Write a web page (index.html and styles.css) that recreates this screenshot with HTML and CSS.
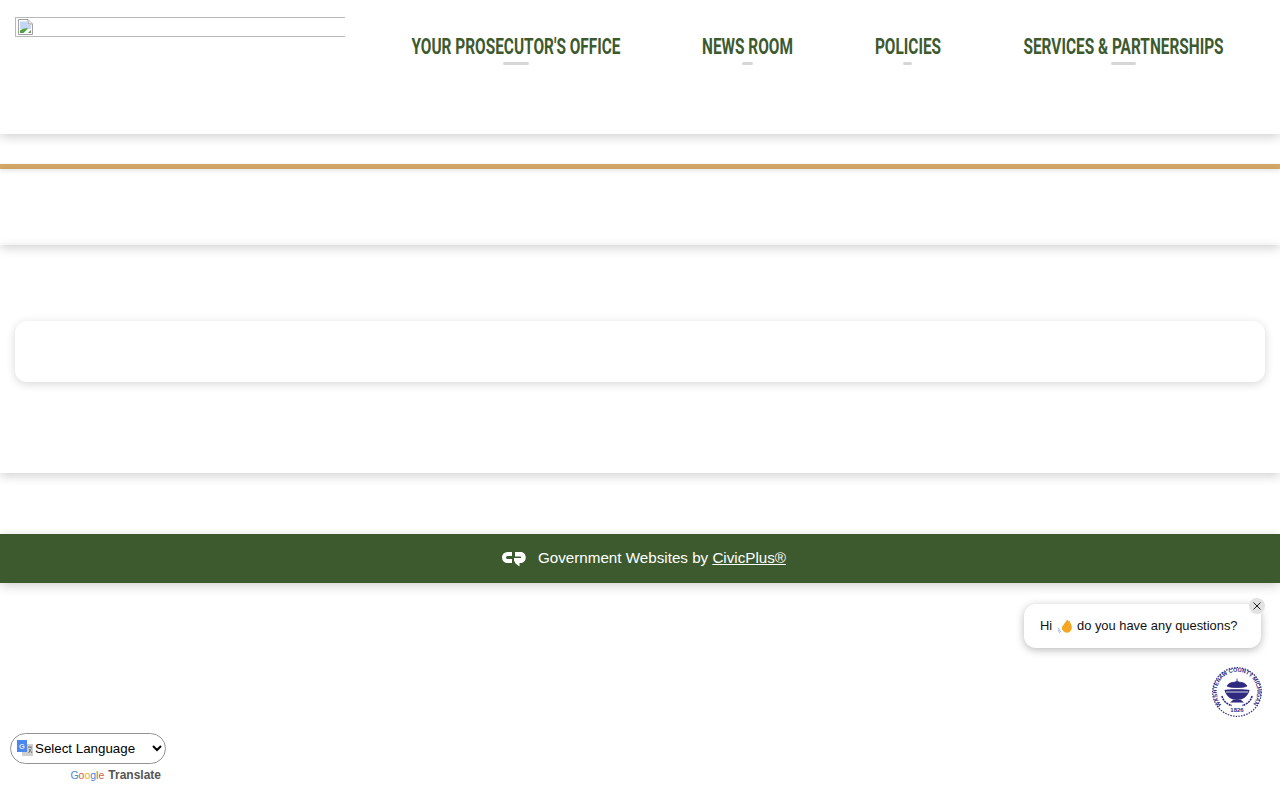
FILE: index.html
```html
<!DOCTYPE html>
<html lang="en">
	<head>
		<meta charset="UTF-8">
		<title>Prosecutor's Office</title>
		<link rel="stylesheet" href="styles.css">
	</head>
	<body>
		<header class="header">
			<a class="logo" href="#">
				<svg class="brokenimg" width="16" height="16" viewBox="0 0 16 16">
					<path d="M1.5 .5H11L15.5 5V15.5H1.5Z" fill="#fff" stroke="#a0a0a0"/>
					<path d="M11 .5V5H15.5" fill="#e8e8e8" stroke="#a0a0a0"/>
					<path d="M3 2.5H10.5V6H14V10L3 10Z" fill="#c3d6f5"/>
					<path d="M3 14V11.5C6 9.5 9 9 11 9.5L6.5 14Z" fill="#4fa03f"/>
					<path d="M11 14L14 11V14Z" fill="#6a9a5a"/>
				</svg>
			</a>
			<nav class="nav">
				<a class="navitem w-office" href="#"><span>YOUR PROSECUTOR'S OFFICE</span></a>
				<a class="navitem w-news" href="#"><span>NEWS ROOM</span></a>
				<a class="navitem w-policies" href="#"><span>POLICIES</span></a>
				<a class="navitem w-services" href="#"><span>SERVICES &amp; PARTNERSHIPS</span></a>
			</nav>
		</header>
		<div class="goldline"></div>
		<div class="band"></div>
		<section class="content">
			<div class="card"></div>
		</section>
		<footer class="footer">
			<svg class="cplogo" width="24" height="16" viewBox="0 0 24 16">
				<path d="M10 3H5.500C3.500 3 2 4.500 2 6.500C2 8.500 3.500 10 5.500 10H10" fill="none" stroke="#fff" stroke-width="4"/>
				<path d="M12 7H18.500C19.500 7 19.500 5.500 18.500 5.500H13V1H18.500C25.500 1 25.500 12 18.500 12H17.500V15.500L13 12V10.500H12Z" fill="#fff"/>
			</svg>
			<span class="footertext">Government Websites by <a href="#">CivicPlus®</a></span>
		</footer>

		<div class="translate">
			<div class="selectwrap">
				<svg class="gicon" width="18" height="17" viewBox="0 0 18 17">
					<rect x="6" y="4" width="11" height="12" fill="#cfcfcf"/>
					<path d="M12 7H16M14 7V8M12.500 13L15.500 8.500M13 9L16 13" stroke="#777" fill="none"/>
					<path d="M1 0H11V12H1Z" fill="#4a88ee"/>
					<text class="gletter" x="3" y="9">G</text>
				</svg>
				<select class="langselect">
					<option>Select Language</option>
				</select>
			</div>
			<div class="poweredby">
				<span class="googleword"><i class="gb">G</i><i class="gr">o</i><i class="gy">o</i><i class="gb">g</i><i class="gg">l</i><i class="gr">e</i></span>
				<a href="#">Translate</a>
			</div>
		</div>

		<div class="chatbubble">
			<span>Hi</span>
			<svg class="wave" width="16" height="16" viewBox="0 0 16 16">
				<path d="M1 9.500C2 11.500 3 13 4 14M1 12C1.500 13 2 14 3 15" stroke="#9ab4dc" fill="none"/>
				<path d="M5 9L9.500 2.500C10.500 1.500 11.500 2.500 11 3.500L11.500 3C12.500 2.500 13.500 3.500 13 4.500C14.500 6 15.500 9 14.500 11.500C13.500 14.500 10 15.500 7.500 14C5.500 13 4.500 11 5 9Z" fill="#f5a623"/>
			</svg>
			<span>do you have any questions?</span>
			<button class="chatclose">
				<svg width="8" height="8" viewBox="0 0 8 8"><path d="M.5 .5L7.500 7.500M7.500 .5L.5 7.500" stroke="#222" stroke-width="1"/></svg>
			</button>
		</div>

		<svg class="seal" width="50" height="50" viewBox="0 0 50 50">
			<defs>
				<path id="sealtop" d="M9.500 38A20.200 20.200 0 1 1 40.500 38"/>
			</defs>
			<circle cx="25" cy="25" r="24.300" fill="#fff" stroke="#2f2a80" stroke-width="1.200" stroke-dasharray="1.500 1.200"/>
			<text class="sealtext"><textPath href="#sealtop" textLength="90" lengthAdjust="spacingAndGlyphs">WASHTENAW COUNTY MICHIGAN</textPath></text>
			<text class="sealyear" x="25" y="45" text-anchor="middle">1826</text>
			<path d="M25 11.500V14M15 19C18 14 22 16.500 25 14C28 16.500 32 14 35 19C32 21 18 21 15 19Z" fill="#2f2a80" stroke="#2f2a80" stroke-width=".8"/>
			<path d="M12.500 23C16 22 34 22 37.500 23C36 30 30 33 25 33C20 33 14 30 12.500 23Z" fill="#2f2a80"/>
			<path d="M14 25H36" stroke="#fff" stroke-width=".8"/>
			<path d="M18 35.500H32L29 33H21Z" fill="#2f2a80"/>
			<path d="M10 29C11 34 15 37.500 20 38.500M40 29C39 34 35 37.500 30 38.500" fill="none" stroke="#2f2a80" stroke-width="1.600" stroke-dasharray="2 .8"/>
		</svg>
	</body>
</html>
```

FILE: styles.css
```css
html, body {
	margin: 0px;
	padding: 0px;
	height: 800px;
	overflow: hidden;
	background-color: #fff;
	font-family: "Liberation Sans", Arial, sans-serif;
}
body {
	position: relative;
}

.header {
	display: flex;
	align-items: flex-start;
	justify-content: space-between;
	box-sizing: border-box;
	height: 134px;
	padding: 17px 15px 0px;
	box-shadow: 0px 3px 10px rgba(0, 0, 0, .18);
}
.logo {
	display: block;
	box-sizing: border-box;
	width: 330px;
	height: 20px;
	padding: 1px;
	border: 1px solid #b8b8b8;
	border-right: none;
	overflow: hidden;
}
.brokenimg {
	display: block;
}
.nav {
	display: flex;
	column-gap: 82.400px;
	margin-right: 41px;
	padding-top: 15px;
}
.navitem {
	display: block;
	color: #3d5a2f;
	text-decoration: none;
	text-align: center;
}
.navitem > span {
	display: block;
	margin: 0px -50px;
	font-family: Roboto, "Liberation Sans", sans-serif;
	font-size: 22px;
	font-weight: 700;
	line-height: 30px;
	white-space: nowrap;
	transform: scaleX(.7);
	transform-origin: center;
}
.navitem::after {
	content: "";
	display: block;
	width: 12.5%;
	height: 3px;
	margin: 0px auto;
	border-radius: 2px;
	background-color: #d6d6d6;
}
.w-office { width: 210px; }
.w-news { width: 89px; }
.w-policies { width: 66px; }
.w-services { width: 201px; }

.goldline {
	height: 5px;
	margin-top: 30px;
	background-color: #d6a968;
	box-shadow: 0px 2px 4px rgba(0, 0, 0, .1);
}
.band {
	height: 76px;
	box-shadow: 0px 3px 10px rgba(0, 0, 0, .18);
}
.content {
	box-sizing: border-box;
	height: 228px;
	padding: 76px 15px 0px;
	box-shadow: 0px 3px 10px rgba(0, 0, 0, .18);
}
.card {
	height: 61px;
	border-radius: 12px;
	background-color: #fff;
	box-shadow: 0px 2px 10px rgba(0, 0, 0, .16);
}

.footer {
	display: flex;
	align-items: center;
	justify-content: center;
	column-gap: 12px;
	box-sizing: border-box;
	height: 49px;
	margin-top: 61px;
	padding: 0px 0px 3px 8px;
	background-color: #3d5a2f;
	color: #fff;
	font-size: 15.200px;
	box-shadow: 0px 3px 10px rgba(0, 0, 0, .18);
}
.footer a {
	color: #fff;
}
.cplogo {
	display: block;
	margin-top: 4px;
}

.translate {
	position: absolute;
	left: 10px;
	top: 733px;
	width: 156px;
}
.selectwrap {
	position: relative;
}
.gicon {
	position: absolute;
	left: 6px;
	top: 7px;
}
.gletter {
	fill: #dbe7fb;
	font-family: "Liberation Sans", sans-serif;
	font-size: 7.500px;
	font-weight: 700;
}
.langselect {
	display: block;
	box-sizing: border-box;
	width: 156px;
	height: 31px;
	padding-left: 20px;
	border: 1px solid #949494;
	border-radius: 16px;
	background-color: transparent;
	color: #000;
	font-family: "Liberation Sans", sans-serif;
	font-size: 13.330px;
}
.poweredby {
	display: flex;
	justify-content: flex-end;
	align-items: baseline;
	column-gap: 4px;
	padding: 4px 5px 0px 0px;
	font-size: 12px;
	font-weight: 700;
}
.poweredby a {
	color: #555;
	text-decoration: none;
}
.googleword {
	font-size: 10.500px;
	font-weight: 400;
}
.googleword i {
	font-style: normal;
}
.gb { color: #4a85e8; }
.gr { color: #e2574c; }
.gy { color: #f0b400; }
.gg { color: #3aa757; }

.chatbubble {
	position: absolute;
	left: 1024px;
	top: 604px;
	display: flex;
	align-items: center;
	column-gap: 4.400px;
	box-sizing: border-box;
	width: 237px;
	height: 44px;
	padding: 0px 0px 1px 16px;
	border-radius: 12px;
	background-color: #fff;
	box-shadow: 0px 2px 8px rgba(0, 0, 0, .28);
	color: #111;
	font-size: 12.900px;
}
.wave {
	display: block;
}
.chatclose {
	position: absolute;
	top: -6px;
	right: -4px;
	display: flex;
	align-items: center;
	justify-content: center;
	width: 16px;
	height: 16px;
	padding: 0px;
	border: none;
	border-radius: 50%;
	background-color: #e2e2e2;
}
.seal {
	position: absolute;
	left: 1212px;
	top: 667px;
}
.sealtext {
	fill: #2f2a80;
	font-family: "Liberation Sans", sans-serif;
	font-size: 5.600px;
	font-weight: 700;
}
.sealyear {
	fill: #2f2a80;
	font-family: "Liberation Sans", sans-serif;
	font-size: 6px;
	font-weight: 700;
}
```
